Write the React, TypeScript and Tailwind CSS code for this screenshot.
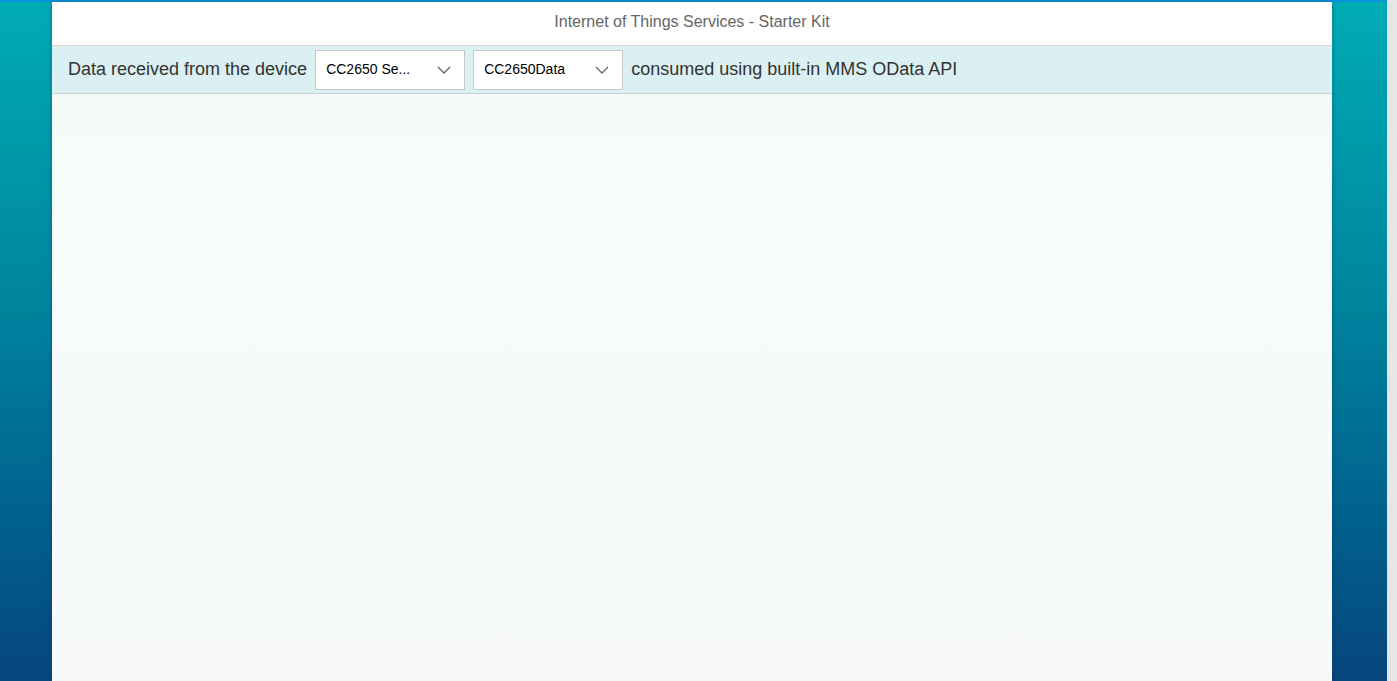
import React from "react";

function Chevron() {
  return (
    <svg width="14" height="8" viewBox="0 0 14 8" fill="none">
      <path d="M1 1l6 6 6-6" stroke="#666" strokeWidth="1.3" />
    </svg>
  );
}

function Select({ label }: { label: string }) {
  return (
    <div className="flex h-[40px] w-[150px] shrink-0 items-center justify-between border border-[#c8c8c8] bg-white pl-[10px] pr-[13px] text-[14px] text-black">
      <span>{label}</span>
      <Chevron />
    </div>
  );
}

export default function App() {
  return (
    <div
      className="flex h-[681px] w-[1397px] overflow-hidden"
      style={{ fontFamily: '"Liberation Sans", Arial, sans-serif' }}
    >
      <div className="flex h-full w-[1387px] flex-col bg-[linear-gradient(180deg,#00acb5_0%,#0089a0_40%,#00628f_75%,#07457e_100%)]">
        <div className="h-[2px] w-full bg-[#0a93dc]" />
        <div className="ml-[52px] flex w-[1280px] flex-1 flex-col shadow-[0_0_6px_rgba(0,40,70,0.35)]">
          <div className="flex h-[44px] items-center justify-center border-b border-[#d6d6d6] bg-white pb-[4px] text-[16px] text-[#666]">
            Internet of Things Services - Starter Kit
          </div>
          <div className="flex h-[48px] items-center gap-[8px] border-b border-[#c9cfd1] bg-[#dbf0f2] pl-[16px] text-[18px] text-[#333]">
            <span>Data received from the device</span>
            <Select label="CC2650 Se..." />
            <Select label="CC2650Data" />
            <span>consumed using built-in MMS OData API</span>
          </div>
          <div className="flex-1 bg-[linear-gradient(180deg,#f5fbfb_0%,#f7f9fa_100%)]" />
        </div>
      </div>
      <div className="h-full w-[10px] bg-[#e6e6e6]" />
    </div>
  );
}
